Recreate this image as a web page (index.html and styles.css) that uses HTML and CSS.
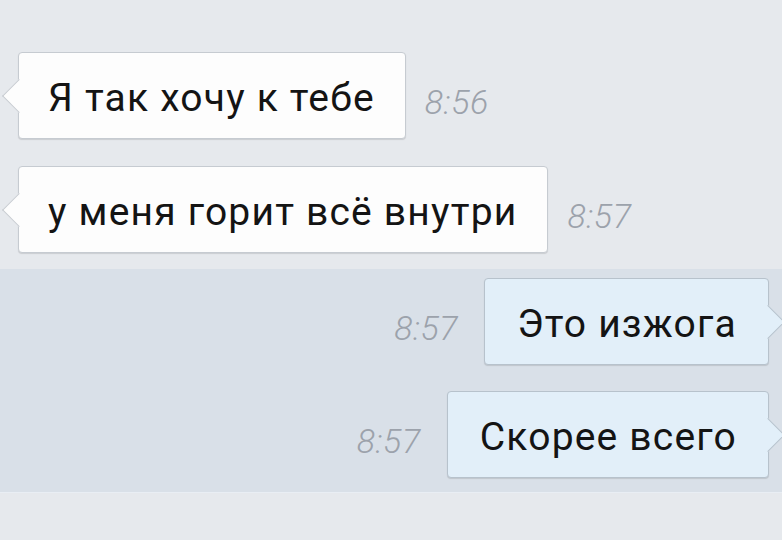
FILE: index.html
```html
<!DOCTYPE html>
<html lang="ru">
<head>
    <meta charset="UTF-8">
    <meta name="viewport" content="width=device-width, initial-scale=1.0">
    <title>Чат</title>
    <link rel="stylesheet" href="styles.css">
</head>
<body>
    <div class="chat">
        <div class="group">
            <div class="row">
                <div class="bubble">Я так хочу к тебе</div>
                <span class="time">8:56</span>
            </div>
            <div class="row">
                <div class="bubble">у меня горит всё внутри</div>
                <span class="time">8:57</span>
            </div>
        </div>
        <div class="group mine">
            <div class="row">
                <span class="time">8:57</span>
                <div class="bubble">Это изжога</div>
            </div>
            <div class="row">
                <span class="time">8:57</span>
                <div class="bubble">Скорее всего</div>
            </div>
        </div>
    </div>
</body>
</html>
```

FILE: styles.css
```css
body {
    margin: 0;
    padding: 0;
    background: #e6e9ed;
    font-family: Roboto, "Liberation Sans", sans-serif;
    color: #141414;
    overflow: hidden;
}
.chat {
    height: 540px;
}
.group {
    display: flex;
    flex-direction: column;
    gap: 27px;
    padding: 52px 0 16px 18px;
}
.group.mine {
    background: #d9e0e8;
    border-bottom: 1px solid #e9eef4;
    padding: 9px 13px 14px 0;
    gap: 26px;
}
.row {
    display: flex;
    align-items: baseline;
    gap: 19px;
}
.mine .row {
    justify-content: flex-end;
    gap: 26px;
}
.bubble {
    position: relative;
    background: #fdfdfd;
    border: 1px solid #c6cbd1;
    border-radius: 4px;
    box-shadow: 0 1px 1px rgba(0, 0, 0, 0.12);
    font-size: 39px;
    letter-spacing: 1.2px;
    line-height: 80px;
    padding: 5px 30px 0 29px;
}
.bubble::before {
    content: "";
    position: absolute;
    left: -12px;
    top: 50%;
    width: 23px;
    height: 23px;
    margin-top: -12px;
    background: inherit;
    border-left: 1px solid #c6cbd1;
    border-bottom: 1px solid #c6cbd1;
    transform: rotate(45deg);
}
.mine .bubble {
    background: #e2eff9;
    border-color: #b7c2cc;
    padding: 5px 31px 0 32px;
}
.mine .bubble::before {
    left: auto;
    right: -12px;
    border-left: 0;
    border-bottom: 0;
    border-right: 1px solid #b7c2cc;
    border-top: 1px solid #b7c2cc;
}
.time {
    font-size: 34px;
    letter-spacing: 0.5px;
    font-weight: 300;
    font-style: italic;
    color: #9ca2ab;
    position: relative;
    top: 3px;
}
```
